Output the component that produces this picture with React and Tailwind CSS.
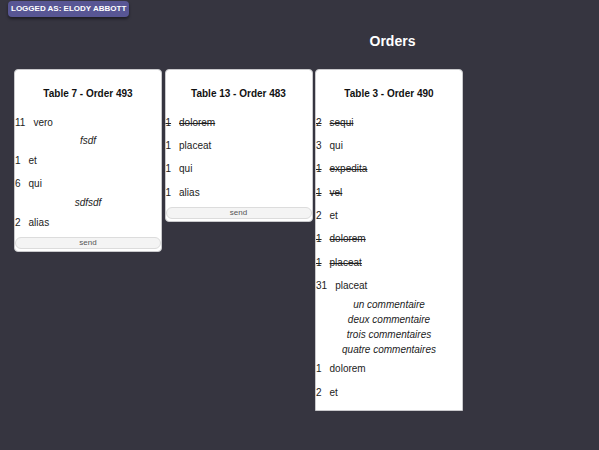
import React from "react";

const ORDERS = [
  {
    title: "Table 7 - Order 493",
    send: true,
    items: [
      { qty: 11, name: "vero", comments: ["fsdf"] },
      { qty: 1, name: "et" },
      { qty: 6, name: "qui", comments: ["sdfsdf"] },
      { qty: 2, name: "alias" },
    ],
  },
  {
    title: "Table 13 - Order 483",
    send: true,
    items: [
      { qty: 1, name: "dolorem", done: true },
      { qty: 1, name: "placeat" },
      { qty: 1, name: "qui" },
      { qty: 1, name: "alias" },
    ],
  },
  {
    title: "Table 3 - Order 490",
    send: false,
    items: [
      { qty: 2, name: "sequi", done: true },
      { qty: 3, name: "qui" },
      { qty: 1, name: "expedita", done: true },
      { qty: 1, name: "vel", done: true },
      { qty: 2, name: "et" },
      { qty: 1, name: "dolorem", done: true },
      { qty: 1, name: "placeat", done: true },
      {
        qty: 31,
        name: "placeat",
        comments: ["un commentaire", "deux commentaire", "trois commentaires", "quatre commentaires"],
      },
      { qty: 1, name: "dolorem" },
      { qty: 2, name: "et" },
    ],
  },
];

function OrderCard({ order }) {
  return (
    <div
      className={`w-[148px] shrink-0 bg-white border border-[#c9c9cc] ${
        order.send ? "rounded-[4px] pb-[2px]" : "rounded-t-[4px] pb-[6px]"
      }`}
    >
      {/* Header */}
      <div className="h-[38px] mb-[3px] flex items-end justify-center pb-[8px]">
        <h3 className="text-[10px] leading-[12px] font-bold text-[#111]">{order.title}</h3>
      </div>

      {/* Items */}
      <div>
        {order.items.map((item, i) => (
          <div key={i}>
            <div
              className={`h-[23.33px] flex items-center gap-2 text-[10px] leading-[12px] text-[#222] ${
                item.done ? "line-through" : ""
              }`}
            >
              <span>{item.qty}</span>
              <span>{item.name}</span>
            </div>
            {item.comments && (
              <div className="-mt-[1px] mb-[1px]">
                {item.comments.map((c, j) => (
                  <p key={j} className="h-[15px] text-center text-[10px] leading-[15px] italic text-[#222]">
                    {c}
                  </p>
                ))}
              </div>
            )}
          </div>
        ))}
      </div>

      {order.send && (
        <button className="mt-[3px] w-full h-[12px] flex items-center justify-center rounded-[6px] bg-[#f4f4f4] border border-[#dcdcdc] text-[8px] leading-[10px] text-[#555]">
          send
        </button>
      )}
    </div>
  );
}

export default function App() {
  return (
    <div className="min-h-screen w-full bg-[#363540] font-['Liberation_Sans',Arial,sans-serif] pt-[1px]">
      {/* Logged badge */}
      <div className="ml-[8px] w-fit flex items-center h-[16px] px-[3px] rounded-[4px] bg-[#585694] shadow-[0_2px_3px_rgba(0,0,0,0.45)]">
        <span className="text-[8px] leading-[10px] font-bold text-white uppercase">Logged as: Elody Abbott</span>
      </div>

      {/* Title */}
      <div className="mt-[14px] pl-[186px] flex justify-center">
        <h1 className="text-[14px] leading-[20px] font-bold text-white">Orders</h1>
      </div>

      {/* Cards */}
      <div className="mt-[18px] pl-[14px] flex items-start gap-[2.5px]">
        {ORDERS.map((o, i) => (
          <OrderCard key={i} order={o} />
        ))}
      </div>
    </div>
  );
}
